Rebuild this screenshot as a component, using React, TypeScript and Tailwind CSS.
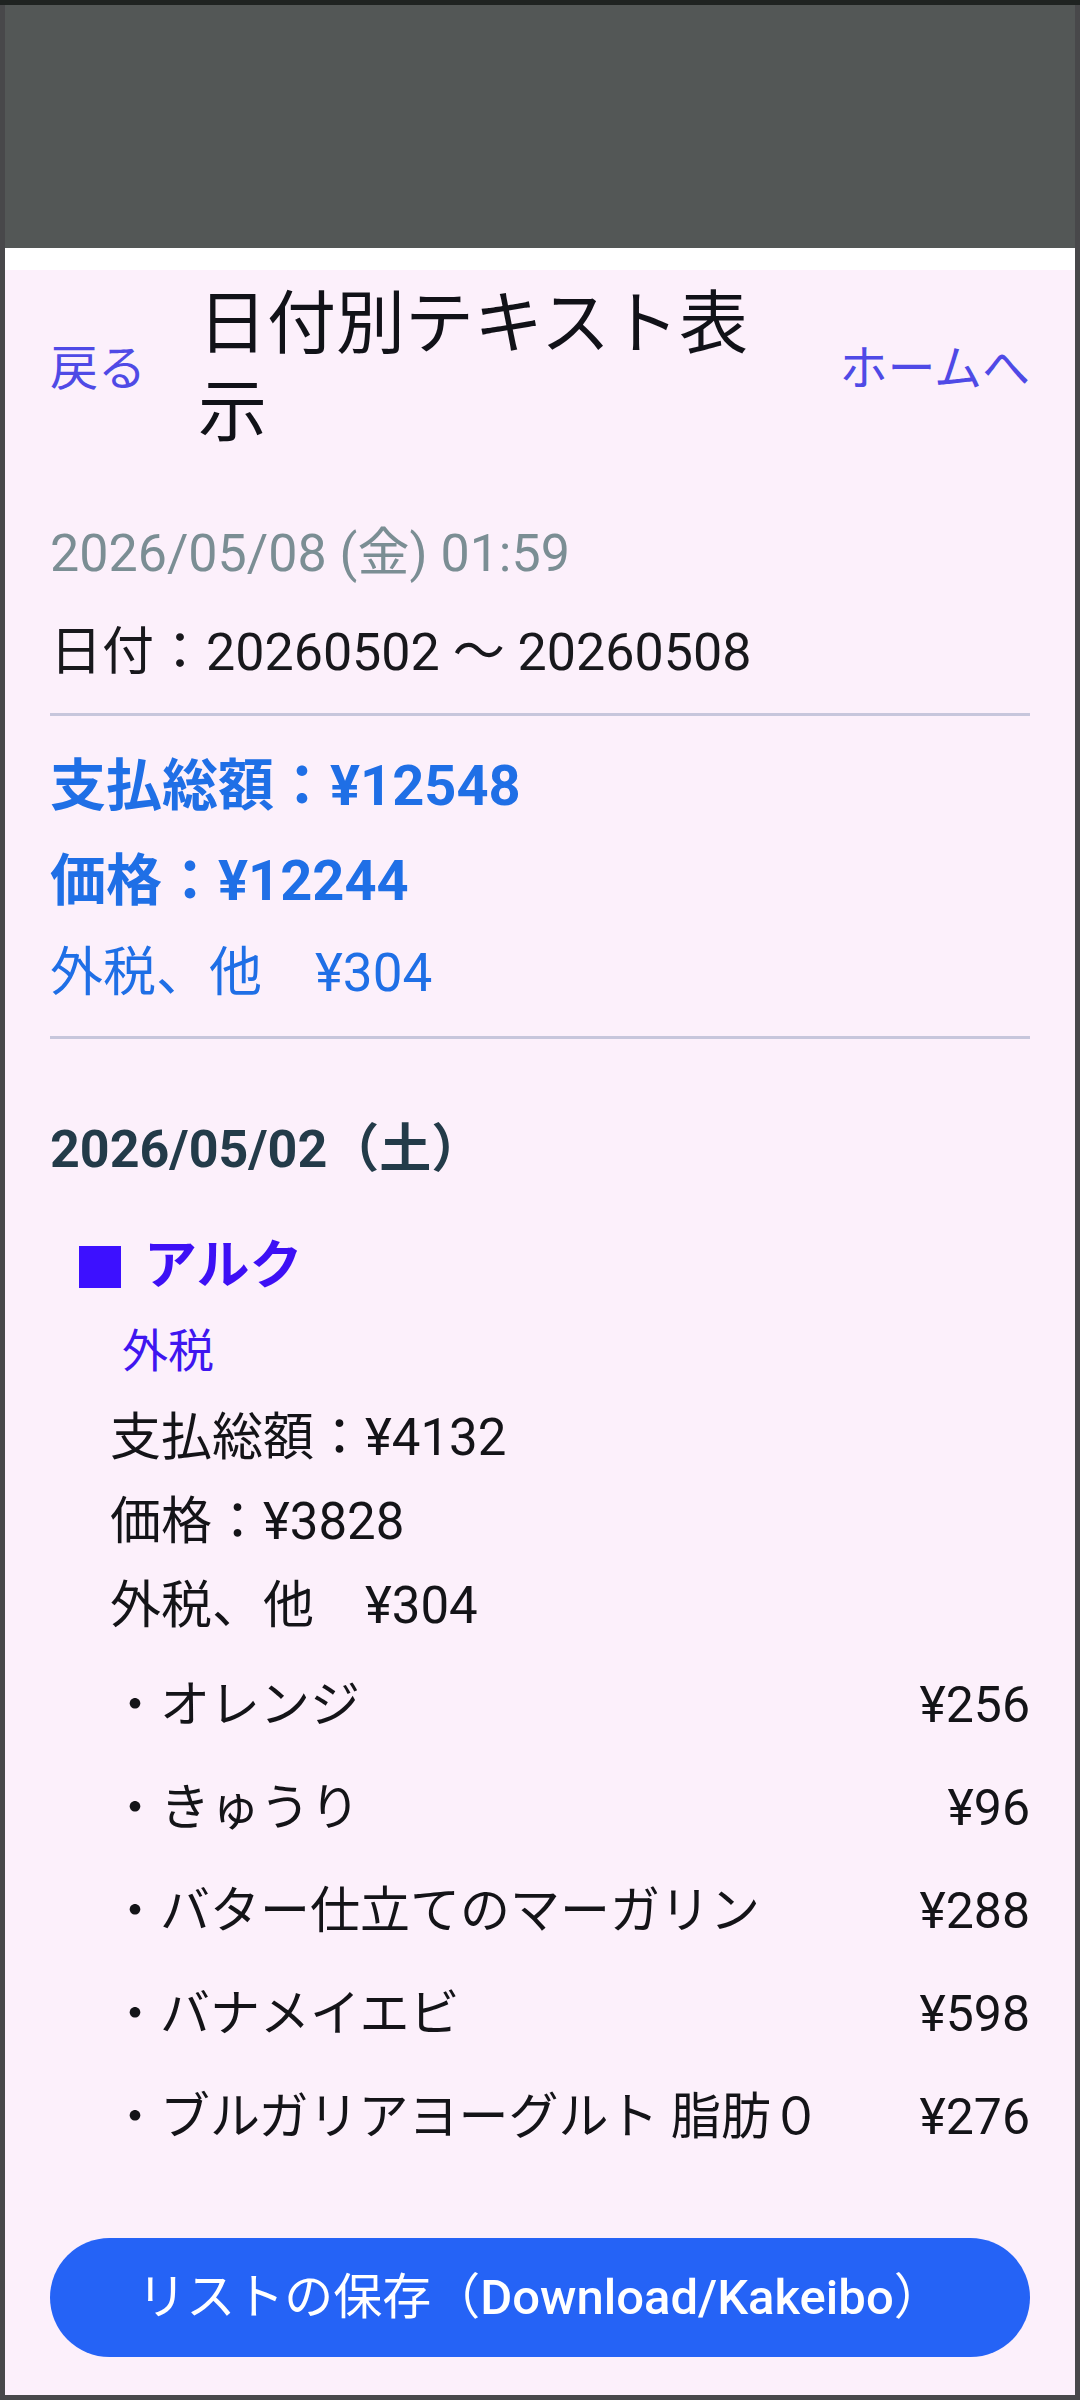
import React from "react";

const items: [string, string][] = [
  ["・オレンジ", "¥256"],
  ["・きゅうり", "¥96"],
  ["・バター仕立てのマーガリン", "¥288"],
  ["・バナメイエビ", "¥598"],
  ["・ブルガリアヨーグルト 脂肪０", "¥276"],
];

export default function App() {
  return (
    <div
      className="w-[1080px] h-[2400px] overflow-hidden bg-[#48484a] border-t-[5px] border-t-[#1f2321] px-[5px] pb-[5px] flex flex-col"
      style={{ fontFamily: 'Roboto, "Noto Sans CJK JP", sans-serif' }}
    >
      <div className="h-[243px] shrink-0 bg-[#535756]" />
      <div className="h-[22px] shrink-0 bg-white" />
      <div className="flex-1 bg-[#fcf0fb] px-[45px] flex flex-col">
        {/* Header */}
        <div className="pt-[11px] flex items-center">
          <span className="text-[48px] leading-[60px] text-[#4f4ae6]">戻る</span>
          <h1 className="ml-[52px] w-[590px] text-[69px] leading-[88px] font-normal text-[#111218]">
            日付別テキスト表示
          </h1>
          <span className="ml-auto text-[48px] leading-[60px] text-[#4f4ae6]">ホームへ</span>
        </div>

        <div className="mt-[62px] text-[52px] leading-[70px] text-[#7b8e94]">
          2026/05/08 (金) 01:59
        </div>
        <div className="mt-[29px] text-[52px] leading-[70px] text-[#18181c]">
          日付：20260502 〜 20260508
        </div>
        <div className="mt-[25px] h-[3px] bg-[#c7c6dc]" />

        <div className="mt-[30px] text-[56px] leading-[80px] font-bold text-[#1f6fe6]">
          支払総額：¥12548
        </div>
        <div className="mt-[15px] text-[56px] leading-[80px] font-bold text-[#1f6fe6]">
          価格：¥12244
        </div>
        <div className="mt-[17px] text-[53px] leading-[70px] text-[#1f6fe6]">
          外税、他　¥304
        </div>
        <div className="mt-[28px] h-[3px] bg-[#c7c6dc]" />

        <div className="mt-[76px] text-[52px] leading-[70px] font-bold text-[#233b49]">
          2026/05/02（土）
        </div>

        <div className="mt-[47px] pl-[29px] flex items-center h-[70px] text-[53px] font-bold text-[#3d10f5]">
          <span className="inline-block w-[42px] h-[42px] bg-[#3d10ff] mr-[23px]" aria-hidden="true" />
          <span>アルク</span>
        </div>
        <div className="mt-[19px] pl-[72px] text-[46px] leading-[60px] text-[#3f16f0]">
          外税
        </div>

        <div className="mt-[15px] pl-[60px] flex flex-col text-[51px] leading-[84px] text-[#141418]">
          <div>支払総額：¥4132</div>
          <div>価格：¥3828</div>
          <div>外税、他　¥304</div>
        </div>

        <div className="mt-[6px] pl-[60px] flex flex-col text-[50px] text-[#141418]">
          {items.map(([name, price]) => (
            <div key={name} className="h-[103px] flex items-center justify-between">
              <span>{name}</span>
              <span>{price}</span>
            </div>
          ))}
        </div>

        <button className="mt-[69px] h-[119px] w-full rounded-full bg-[#2563f6] text-white text-[49px]">
          <span className="font-normal">リストの保存（</span>
          <span className="font-medium">Download/Kakeibo</span>
          <span className="font-normal">）</span>
        </button>
      </div>
    </div>
  );
}
